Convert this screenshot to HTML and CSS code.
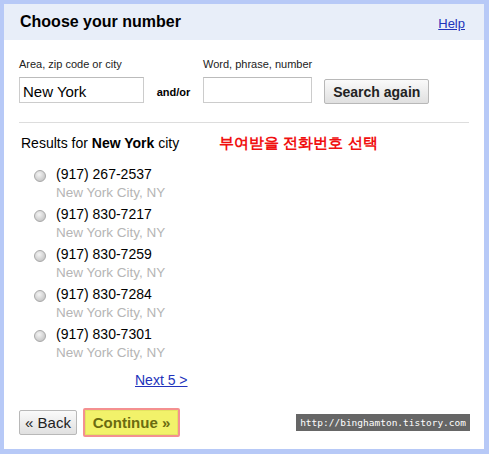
FILE: index.html
```html
<!DOCTYPE html>
<html lang="en">
<head>
    <meta charset="UTF-8" />
    <title>Choose your number</title>
    <link rel="stylesheet" href="styles.css">
</head>
<body>
    <div class="panel">
        <div class="panel-header">
            <h2>Choose your number</h2>
            <a href="#" class="help">Help</a>
        </div>
        <div class="panel-body">
            <form class="search-form">
                <div class="field">
                    <label for="area">Area, zip code or city</label>
                    <input type="text" id="area" class="area-input" value="New York" />
                </div>
                <span class="andor">and/or</span>
                <div class="field">
                    <label for="word">Word, phrase, number</label>
                    <input type="text" id="word" class="word-input" />
                </div>
                <button type="button" class="btn btn-search">Search again</button>
            </form>

            <hr class="divider" />

            <div class="results-head">
                <span>Results for <b>New York</b> city</span>
                <span class="note">부여받을 전화번호 선택</span>
            </div>

            <ul class="results">
                <li><input type="radio" name="num" /><div><div class="num">(917) 267-2537</div><div class="loc">New York City, NY</div></div></li>
                <li><input type="radio" name="num" /><div><div class="num">(917) 830-7217</div><div class="loc">New York City, NY</div></div></li>
                <li><input type="radio" name="num" /><div><div class="num">(917) 830-7259</div><div class="loc">New York City, NY</div></div></li>
                <li><input type="radio" name="num" /><div><div class="num">(917) 830-7284</div><div class="loc">New York City, NY</div></div></li>
                <li><input type="radio" name="num" /><div><div class="num">(917) 830-7301</div><div class="loc">New York City, NY</div></div></li>
            </ul>

            <div class="next"><a href="#">Next 5 &gt;</a></div>

            <div class="actions">
                <button type="button" class="btn btn-back">&laquo; Back</button>
                <button type="button" class="btn btn-continue">Continue &raquo;</button>
                <span class="watermark">http://binghamton.tistory.com</span>
            </div>
        </div>
    </div>
</body>
</html>
```

FILE: styles.css
```css
body {
    margin: 0;
    padding: 4px 5px 5px 4px;
    background: #b7c9f7;
    font-family: "Liberation Sans", Arial, sans-serif;
    color: #000;
}
.panel {
    background: #fff;
    height: 445px;
    box-sizing: border-box;
}
.panel-header {
    height: 36px;
    background: #e8eef9;
    display: flex;
    align-items: center;
    justify-content: space-between;
    padding: 0 19px 0 16px;
}
.panel-header h2 {
    margin: 0;
    font-size: 16px;
    font-weight: bold;
}
.help {
    color: #2233bb;
    font-size: 13px;
    margin-top: 2px;
}
.panel-body {
    padding: 18px 15px 0 15px;
}
.search-form {
    display: flex;
    align-items: flex-end;
}
.field label {
    display: block;
    font-size: 11px;
    color: #222;
    margin-bottom: 7px;
}
.field input {
    height: 26px;
    box-sizing: border-box;
    border: 1px solid #ccc;
    border-top-color: #bbb;
    font-family: "Liberation Sans", Arial, sans-serif;
    font-size: 15px;
    padding: 2px 3px 0;
    margin: 0;
}
.area-input {
    width: 125px;
    text-decoration: underline #f4a0a0;
    text-decoration-thickness: 2px;
    text-underline-offset: 3px;
}
.word-input {
    width: 109px;
}
.andor {
    font-size: 11px;
    font-weight: bold;
    width: 59px;
    text-align: center;
    padding-bottom: 5px;
}
.btn {
    font-family: "Liberation Sans", Arial, sans-serif;
    border: 1px solid #b8b8b8;
    border-radius: 2px;
    background: linear-gradient(#fafafa, #e0e0e0);
    color: #222;
    padding: 0;
    margin: 0;
    cursor: pointer;
    flex-shrink: 0;
}
.btn-search {
    margin-left: 12px;
    margin-bottom: -1px;
    width: 105px;
    height: 25px;
    font-size: 14px;
    font-weight: bold;
}
.divider {
    border: none;
    border-top: 1px solid #ddd;
    margin: 19px 0 0 0;
    width: 450px;
}
.results-head {
    display: flex;
    font-size: 14px;
    margin: 11px 0 0 2px;
    align-items: center;
    height: 18px;
}
.note {
    color: #f01010;
    font-weight: bold;
    font-size: 15px;
    margin-left: 40px;
}
.results {
    list-style: none;
    margin: 14px 0 0 0;
    padding: 0 0 0 15px;
}
.results li {
    display: flex;
    align-items: flex-start;
    height: 40px;
}
.results input {
    appearance: none;
    -webkit-appearance: none;
    margin: 4px 10px 0 0;
    width: 12px;
    height: 12px;
    border-radius: 50%;
    border: 1px solid #a8a8a8;
    background: radial-gradient(circle at 40% 35%, #f4f4f4, #c8c8c8 75%);
    box-sizing: border-box;
}
.num {
    font-size: 14px;
    line-height: 17px;
}
.loc {
    font-size: 13.5px;
    line-height: 19px;
    color: #b5b5b5;
}
.next {
    font-size: 14px;
    margin: 6px 0 0 116px;
}
.next a {
    color: #2233bb;
}
.actions {
    display: flex;
    align-items: center;
    margin-top: 20px;
    width: 451px;
}
.btn-back {
    width: 58px;
    height: 25px;
    font-size: 15px;
}
.btn-continue {
    margin-left: 6px;
    width: 97px;
    height: 29px;
    font-size: 15px;
    font-weight: bold;
    color: #6b6b10;
    background: #f2f26a;
    border: 2px solid #f49090;
    box-shadow: inset 0 0 0 1px #e4e460;
}
.watermark {
    margin-left: auto;
    background: #666;
    color: #fff;
    font-family: "DejaVu Sans Mono", monospace;
    font-size: 9.5px;
    padding: 3px 4px;
    flex-shrink: 0;
}
```
